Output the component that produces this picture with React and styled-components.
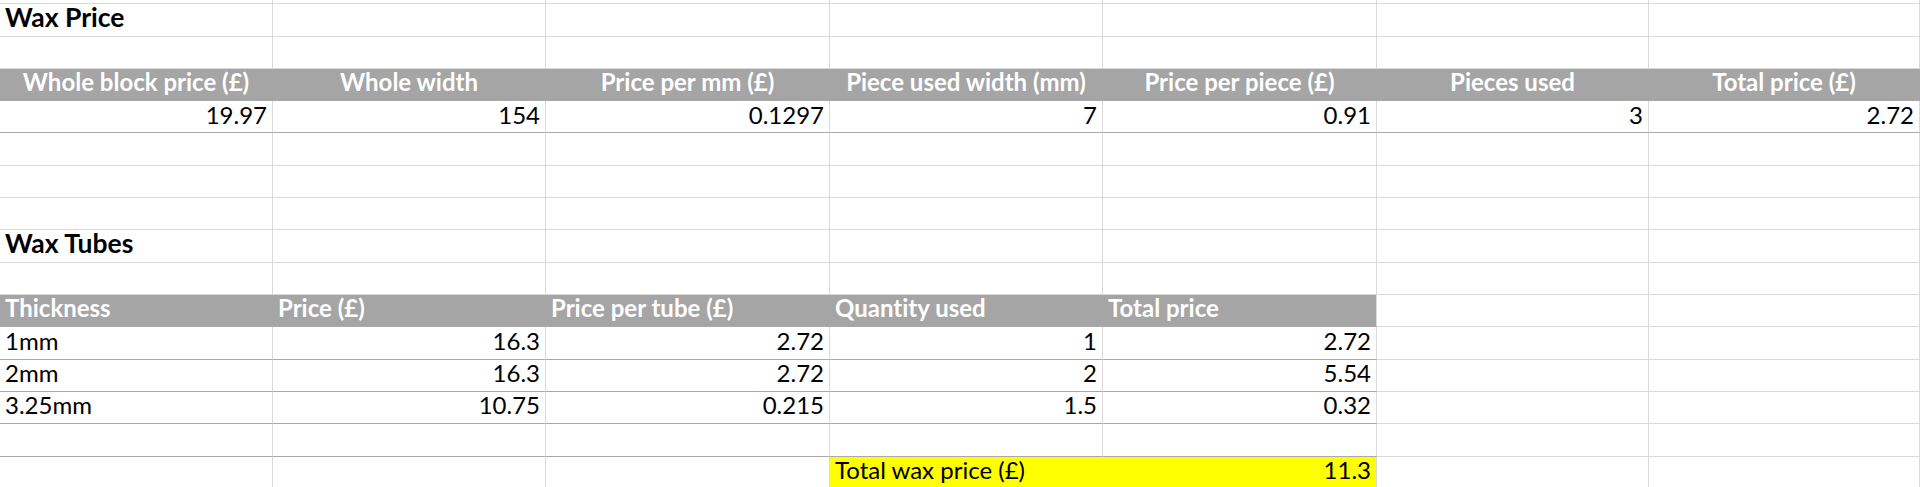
import React from "react";
import styled, {createGlobalStyle} from "styled-components";

const GREY = "#a5a5a5";
const YELLOW = "#ffff00";
const GRID = "#d9d9d9";
const RULE = "#a9a9a9";

const GlobalStyle = createGlobalStyle`
  *, *::before, *::after { box-sizing: border-box; }
  html, body {
    margin: 0;
    padding: 0;
    background: #ffffff;
  }
  body { overflow: hidden; }
`;

const Sheet = styled.div`
  width: 1920px;
  font-family: Lato, "Open Sans", sans-serif;
  font-size: 24px;
  font-variant-ligatures: none;
  color: #000000;
`;

const Row = styled.div`
  display: grid;
  grid-template-columns: 273px 273px 284px 273px 274px 272px 1fr;
  height: ${p => p.$height || 32.33}px;
`;

const Cell = styled.div`
  display: flex;
  align-items: flex-end;
  justify-content: ${p => p.$align === "right" ? "flex-end" : p.$align === "center" ? "center" : "flex-start"};
  padding: 0 5px 3px 5px;
  border-right: 1px solid ${p => p.$fill && !p.$edge ? p.$fill : GRID};
  border-bottom: 1px solid ${p => p.$rule ? RULE : GRID};
  background: ${p => p.$fill || "transparent"};
  color: ${p => p.$fill === GREY ? "#ffffff" : "#000000"};
  font-weight: ${p => p.$bold ? 700 : 400};
  line-height: 1.2;
  white-space: nowrap;
  overflow: hidden;
`;

const TitleCell = styled(Cell)`
  font-size: 26.5px;
  font-weight: 700;
  line-height: 1;
  padding-bottom: 5px;
  overflow: visible;
`;

const blockHeads = ["Whole block price (£)", "Whole width", "Price per mm (£)", "Piece used width (mm)", "Price per piece (£)", "Pieces used", "Total price (£)"];
const blockValues = ["19.97", "154", "0.1297", "7", "0.91", "3", "2.72"];
const tubeHeads = ["Thickness", "Price (£)", "Price per tube (£)", "Quantity used", "Total price"];
const tubes = [
    ["1mm", "16.3", "2.72", "1", "2.72"],
    ["2mm", "16.3", "2.72", "2", "5.54"],
    ["3.25mm", "10.75", "0.215", "1.5", "0.32"],
];
const COLS = [0, 1, 2, 3, 4, 5, 6];

function BlankRow({height, ruled = 0}) {
    return (
        <Row $height={height}>
            {COLS.map(i => <Cell key={i} $rule={i < ruled}/>)}
        </Row>
    );
}

function TitleRow({children}) {
    return (
        <Row>
            {COLS.map(i => <TitleCell key={i}>{i === 0 ? children : null}</TitleCell>)}
        </Row>
    );
}

function App() {
    return (
        <Sheet>
            <GlobalStyle/>
            <BlankRow height={4}/>
            <TitleRow>Wax Price</TitleRow>
            <BlankRow/>

            <Row>
                {blockHeads.map((h, i) => (
                    <Cell key={i} $fill={GREY} $bold $align="center" $rule>{h}</Cell>
                ))}
            </Row>
            <Row>
                {blockValues.map((v, i) => (
                    <Cell key={i} $align="right" $rule>{v}</Cell>
                ))}
            </Row>
            <BlankRow/>
            <BlankRow/>
            <BlankRow/>

            <TitleRow>Wax Tubes</TitleRow>
            <BlankRow/>

            <Row>
                {COLS.map(i => i < 5
                    ? <Cell key={i} $fill={GREY} $edge={i === 4} $bold $rule>{tubeHeads[i]}</Cell>
                    : <Cell key={i}/>)}
            </Row>
            {tubes.map((t, r) => (
                <Row key={r}>
                    {COLS.map(i => i < 5
                        ? <Cell key={i} $align={i === 0 ? "left" : "right"} $rule>{t[i]}</Cell>
                        : <Cell key={i}/>)}
                </Row>
            ))}
            <BlankRow ruled={5}/>

            <Row>
                {COLS.map(i => {
                    if (i === 3) return <Cell key={i} $fill={YELLOW}>Total wax price (£)</Cell>;
                    if (i === 4) return <Cell key={i} $fill={YELLOW} $edge $align="right">11.3</Cell>;
                    return <Cell key={i}/>;
                })}
            </Row>
        </Sheet>
    );
}

export default App;
